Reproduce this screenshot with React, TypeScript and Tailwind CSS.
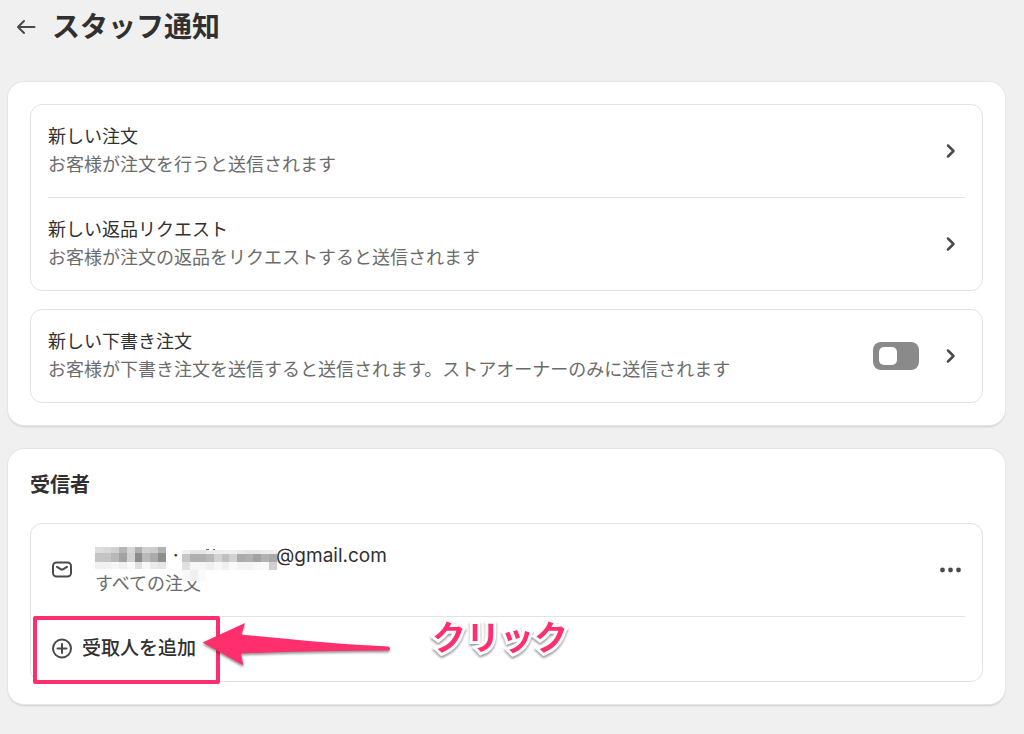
// ============================================================
// Page — Staff Notifications (Settings)
// ============================================================
// Notification types, the recipient list, and the callout that
// points at the "add recipient" button.
// ============================================================

import type { ReactNode } from "react";

interface NotificationItem {
  id: string;
  title: string;
  description: string;
}

const ORDER_NOTIFICATIONS: NotificationItem[] = [
  { id: "new-order", title: "新しい注文", description: "お客様が注文を行うと送信されます" },
  {
    id: "return-request",
    title: "新しい返品リクエスト",
    description: "お客様が注文の返品をリクエストすると送信されます",
  },
];

export default function App() {
  return (
    <main className="min-h-screen bg-[#f0f0f0] pt-[9px] pr-[19px] pb-8 pl-2 font-['Inter','Noto_Sans_CJK_JP',sans-serif] text-lg leading-7 text-[#303030]">
      <header className="flex items-center gap-[14px] pl-2">
        <a href="#settings" aria-label="戻る">
          <BackIcon />
        </a>
        <h1 className="text-[28px] leading-9 font-bold">スタッフ通知</h1>
      </header>

      <div className="mt-[37px] flex flex-col gap-6">
        <Card>
          <div className="flex flex-col gap-[18px]">
            <Box>
              {ORDER_NOTIFICATIONS.map((item) => (
                <NotificationRow key={item.id} item={item} />
              ))}
            </Box>
            <Box>
              <DraftOrderRow />
            </Box>
          </div>
        </Card>

        <Card>
          <h2 className="mb-6 text-xl leading-7 font-bold">受信者</h2>
          <Box>
            <RecipientRow />
            <AddRecipientRow />
          </Box>
        </Card>
      </div>
    </main>
  );
}

function Card({ children }: { children: ReactNode }) {
  return (
    <section className="rounded-2xl bg-white p-[22px] shadow-[0_0_0_1px_#e5e5e5,0_2px_2px_#00000024]">
      {children}
    </section>
  );
}

function Box({ children }: { children: ReactNode }) {
  return (
    <div className="divide-y divide-[#e3e3e3] rounded-xl border border-[#e3e3e3] px-[17px]">
      {children}
    </div>
  );
}

function NotificationRow({ item }: { item: NotificationItem }) {
  return (
    <a href={`#${item.id}`} className="flex items-center py-[18px]">
      <div className="min-w-0 flex-1">
        <p>{item.title}</p>
        <p className="text-[#6b6b6b]">{item.description}</p>
      </div>
      <ChevronIcon />
    </a>
  );
}

function DraftOrderRow() {
  return (
    <div className="flex items-center gap-[18px] py-[18px]">
      <div className="min-w-0 flex-1">
        <label htmlFor="draft-order" className="block">新しい下書き注文</label>
        <p className="text-[#6b6b6b]">
          お客様が下書き注文を送信すると送信されます。ストアオーナーのみに送信されます
        </p>
      </div>
      <input
        id="draft-order"
        type="checkbox"
        role="switch"
        className="flex h-7 w-[46px] shrink-0 appearance-none items-center rounded-lg bg-[#8a8a8a] px-[6px] before:h-[18px] before:w-[18px] before:rounded-[5px] before:bg-white checked:justify-end checked:bg-[#303030]"
      />
      <a href="#draft-order-detail" aria-label="新しい下書き注文">
        <ChevronIcon />
      </a>
    </div>
  );
}

function RecipientRow() {
  return (
    <div className="flex items-center py-[18px]">
      <MailIcon />
      <div className="relative ml-[19px] min-w-0 flex-1">
        <p className="flex text-[19px] leading-7">
          <span className="w-[72px]" />
          <span className="w-[15px] pl-[6px]">·</span>
          <span className="w-[94px]" />
          <span>@gmail.com</span>
        </p>
        <p className="text-[#6b6b6b]">すべての注文</p>
        <Mosaic />
      </div>
      <button type="button" aria-label="その他の操作">
        <MoreIcon />
      </button>
    </div>
  );
}

function AddRecipientRow() {
  return (
    <div className="relative py-[18px]">
      <button type="button" className="flex items-center gap-[6px] text-[19px] leading-7 font-medium">
        <PlusIcon />
        受取人を追加
      </button>

      {/* Callout */}
      <div className="pointer-events-none absolute -top-px -left-[15px] h-[68px] w-[187px] rounded-xs border-4 border-[#ff2f6e]" />
      <svg
        className="pointer-events-none absolute top-0 left-[150px] h-14 w-[200px] drop-shadow-[0_2px_1px_#00000066]"
        viewBox="0 0 200 56"
        fill="#ff2f6e"
      >
        <path d="M4.500 25.500 L47 6 L43.500 17.500 C90 22 140 27.500 190 29.500 Q192 29.500 192 31.500 Q192 33.500 190 33.500 C140 34 90 34.500 43 36.500 L45.500 48.500 Z" />
      </svg>
      <span className="pointer-events-none absolute top-0 left-[384px] text-[34px] leading-[42px] font-bold text-[#ff2f6e] [-webkit-text-stroke:6px_white] [paint-order:stroke_fill] drop-shadow-[0_2px_1px_#00000066]">
        クリック
      </span>
    </div>
  );
}

// Pixelated patches over the recipient's name and address
const MOSAIC_STRIPS = [
  { x: 0, y: 5, h: 6, shades: ["#dcdcdc", "#d8d8d8", "#d0d0d0", "#b5b5b5", "#d6d6d6", "#b0b0b0", "#d0d0d0", "#cccccc", "#b2b2b2"] },
  { x: 0, y: 11, h: 9, shades: ["#c4c4c4", "#c4c4c4", "#b8b8b8", "#a2a2a2", "#d0d0d0", "#8b8b8b", "#b9b9b9", "#ababab", "#8e8e8e"] },
  { x: 0, y: 20, h: 7, shades: ["#f0f0f0", "#f1f1f1", "#f6f6f6", "#f0f0f0", "#fafafa", "#e0e0e0", "#f8f8f8", "#ebebeb", "#e6e6e6"] },
  { x: 87, y: 8, h: 4, shades: ["#f0f0f0", "#e6e6e6", "#e6e6e6", "#ededed", "#eeeeee", "#f0f0f0", "#f0f0f0", "#ebebeb", "#e6e6e6", "#e8e8e8", "#ececec", "#eeeeee"] },
  { x: 87, y: 12, h: 8, shades: ["#c6c6c6", "#b0b0b0", "#b0b0b0", "#b9b9b9", "#d2d2d2", "#c0c0c0", "#d2d2d2", "#ababab", "#b0b0b0", "#a2a2a2", "#b2b2b2", "#a9a9a9"] },
  { x: 87, y: 20, h: 8, shades: ["#e0e0e0", "#f6f6f6", "#f6f6f6", "#f0f0f0", "#f8f8f8", "#f0f0f0", "#fafafa", "#f4f4f4", "#f4f4f4", "#f8f8f8", "#fafafa", "#d0d0d0"] },
  { x: 87, y: 28, h: 11, shades: ["#f8f8f8", "#f0f0f0", "#fafafa"] },
];

function Mosaic() {
  return (
    <svg className="absolute top-0 left-0 h-10 w-[184px]" viewBox="0 0 184 40" shapeRendering="crispEdges">
      {MOSAIC_STRIPS.map((strip) =>
        strip.shades.map((fill, i) => (
          <rect key={`${strip.x}-${strip.y}-${i}`} x={strip.x + i * 7.9} y={strip.y} width={8} height={strip.h} fill={fill} />
        )),
      )}
      <path d="M111 7h3M118 7h2" stroke="#6b6b6b" strokeWidth={1} />
    </svg>
  );
}

// ── Icons ────────────────────────────────────────────────────

function BackIcon() {
  return (
    <svg className="h-6 w-[22px]" viewBox="0 0 22 24" fill="none" stroke="#4a4a4a" strokeWidth={2} strokeLinecap="round" strokeLinejoin="round">
      <path d="M18.500 12H2.500M8 6L2 12L8 18" />
    </svg>
  );
}

function ChevronIcon() {
  return (
    <svg className="h-7 w-7 shrink-0" viewBox="0 0 28 28" fill="none" stroke="#4a4a4a" strokeWidth={2.500} strokeLinecap="round" strokeLinejoin="round">
      <path d="M11 8.500L16.500 14L11 19.500" />
    </svg>
  );
}

function MailIcon() {
  return (
    <svg className="h-7 w-7 shrink-0" viewBox="0 0 28 28" fill="none" stroke="#4a4a4a" strokeWidth={2} strokeLinecap="round" strokeLinejoin="round">
      <rect x={5} y={6.500} width={18} height={14} rx={3.500} />
      <path d="M9 10.800L12.700 13.100Q14 13.900 15.300 13.100L19 10.800" />
    </svg>
  );
}

function MoreIcon() {
  return (
    <svg className="h-7 w-7 shrink-0" viewBox="0 0 28 28" fill="#4a4a4a">
      <circle cx={5.500} cy={14} r={2.400} />
      <circle cx={13.500} cy={14} r={2.400} />
      <circle cx={21.500} cy={14} r={2.400} />
    </svg>
  );
}

function PlusIcon() {
  return (
    <svg className="h-7 w-7 shrink-0" viewBox="0 0 28 28" fill="none" stroke="#4a4a4a" strokeWidth={2} strokeLinecap="round">
      <circle cx={14} cy={13.500} r={9} />
      <path d="M14 9v9M9.500 13.500h9" />
    </svg>
  );
}
